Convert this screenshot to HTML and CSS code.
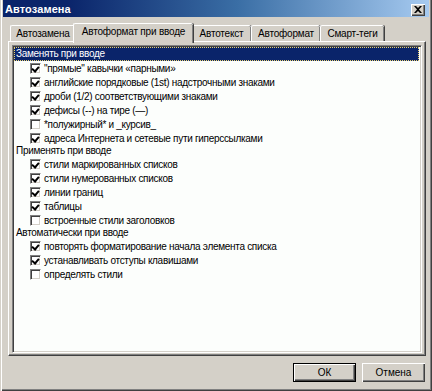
FILE: index.html
```html
<!DOCTYPE html>
<html>
<head>
<meta charset="utf-8">
<link rel="stylesheet" href="styles.css">
</head>
<body>
<div class="window">
  <div class="titlebar">
    <span class="title">Автозамена</span>
    <span class="close"><svg width="8" height="7" viewBox="0 0 8 7"><path d="M0 0h2l2 2 2-2h2l-3 3.5 3 3.5h-2l-2-2-2 2h-2l3-3.5z" fill="#000"/></svg></span>
  </div>
  <div class="content">
    <div class="tabs">
      <div class="tab t1">Автозамена</div>
      <div class="tab t2 active">Автоформат при вводе</div>
      <div class="tab t3">Автотекст</div>
      <div class="tab t4">Автоформат</div>
      <div class="tab t5">Смарт-теги</div>
    </div>
    <div class="panel">
      <div class="list">
        <div class="group sel"><span>Заменять при вводе</span></div>
        <div class="item"><span class="cb on"></span>"прямые" кавычки «парными»</div>
        <div class="item"><span class="cb on"></span>английские порядковые (1st) надстрочными знаками</div>
        <div class="item"><span class="cb on"></span>дроби (1/2) соответствующими знаками</div>
        <div class="item"><span class="cb on"></span>дефисы (--) на тире (—)</div>
        <div class="item"><span class="cb"></span>*полужирный* и _курсив_</div>
        <div class="item"><span class="cb on"></span>адреса Интернета и сетевые пути гиперссылками</div>
        <div class="group">Применять при вводе</div>
        <div class="item"><span class="cb on"></span>стили маркированных списков</div>
        <div class="item"><span class="cb on"></span>стили нумерованных списков</div>
        <div class="item"><span class="cb on"></span>линии границ</div>
        <div class="item"><span class="cb on"></span>таблицы</div>
        <div class="item"><span class="cb"></span>встроенные стили заголовков</div>
        <div class="group">Автоматически при вводе</div>
        <div class="item"><span class="cb on"></span>повторять форматирование начала элемента списка</div>
        <div class="item"><span class="cb on"></span>устанавливать отступы клавишами</div>
        <div class="item"><span class="cb"></span>определять стили</div>
      </div>
    </div>
    <div class="buttons">
      <div class="btn default"><span>ОК</span></div>
      <div class="btn"><span>Отмена</span></div>
    </div>
  </div>
</div>
</body>
</html>
```

FILE: styles.css
```css
html, body {
  margin: 0;
  padding: 0;
  background: #d4d0c8;
}
body {
  font-family: "Liberation Sans", Arial, sans-serif;
  font-size: 10px;
  color: #000;
}
.window {
  width: 432px;
  height: 391px;
  box-sizing: border-box;
  background: #d4d0c8;
  padding: 0 3px 3px 3px;
  box-shadow: inset 1px 0 0 #d4d0c8, inset 2px 0 0 #fff, inset -1px -1px 0 #404040, inset -2px -2px 0 #808080;
  display: flex;
  flex-direction: column;
}
.titlebar {
  height: 17px;
  background: linear-gradient(to right, #0a246a 0%, #0a246a 15%, #3a6ea5 55%, #a6caf0 100%);
  display: flex;
  align-items: center;
  justify-content: space-between;
  padding: 0 4px 0 2px;
}
.title {
  color: #fff;
  font-weight: bold;
  font-size: 11px;
  letter-spacing: 0.1px;
}
.close {
  width: 14px;
  height: 12px;
  background: #d4d0c8;
  box-shadow: inset 1px 1px 0 #fff, inset -1px -1px 0 #404040, inset -2px -2px 0 #808080;
  display: flex;
  align-items: center;
  justify-content: center;
  margin-top: 2px;
}
.content {
  flex: 1;
  display: flex;
  flex-direction: column;
  padding: 6px 3px 0 5px;
}
.tabs {
  display: flex;
  height: 18px;
  padding-left: 2px;
  position: relative;
  z-index: 2;
}
.tab {
  box-sizing: border-box;
  height: 16px;
  margin-top: 2px;
  border-left: 1px solid #fff;
  border-top: 1px solid #fff;
  border-radius: 2px 2px 0 0;
  box-shadow: inset -1px 0 0 #808080, 1px 0 0 #404040;
  display: flex;
  align-items: center;
  justify-content: center;
  white-space: nowrap;
  background: #d4d0c8;
  letter-spacing: -0.2px;
}
.t1 { width: 65px; }
.t2 { width: 120px; }
.t3 { width: 60px; }
.t4 { width: 69px; }
.t5 { width: 64px; }
.tab.active {
  height: 20px;
  margin-top: 0;
  margin-left: -2px;
  margin-right: -2px;
  align-items: flex-start;
  padding-top: 2px;
  position: relative;
  z-index: 3;
}
.panel {
  box-sizing: border-box;
  height: 315px;
  padding: 3px 3px 2px 3px;
  border-left: 1px solid #fff;
  border-top: 1px solid #fff;
  border-right: 1px solid #404040;
  border-bottom: 1px solid #404040;
  box-shadow: inset -1px -1px 0 #808080;
  position: relative;
  z-index: 1;
}
.list {
  box-sizing: border-box;
  height: 100%;
  background: #fcfefc;
  border-left: 1px solid #808080;
  border-top: 1px solid #808080;
  border-right: 1px solid #fff;
  border-bottom: 1px solid #fff;
  box-shadow: inset 1px 1px 0 #404040, inset -1px -1px 0 #d4d0c8;
  padding: 1px 2px 1px 1px;
  letter-spacing: -0.3px;
}
.group {
  height: 12px;
  line-height: 12px;
  padding-left: 2px;
  white-space: nowrap;
}
.group.sel {
  height: 14px;
  line-height: 12px;
  background: #0a246a;
  color: #fff;
  outline: 1px dotted #e8d070;
  outline-offset: -1px;
  padding-top: 1px;
  box-sizing: border-box;
}
.item {
  height: 14px;
  display: flex;
  align-items: center;
  padding-left: 16px;
  white-space: nowrap;
}
.cb {
  width: 11px;
  height: 11px;
  box-sizing: border-box;
  background: #fff;
  border-left: 1px solid #808080;
  border-top: 1px solid #808080;
  border-right: 1px solid #fff;
  border-bottom: 1px solid #fff;
  box-shadow: inset 1px 1px 0 #404040, inset -1px -1px 0 #d4d0c8;
  margin-right: 3px;
  flex: none;
  position: relative;
}
.cb.on::after {
  content: "";
  position: absolute;
  left: 2px;
  top: 1px;
  width: 3px;
  height: 5px;
  border-right: 2px solid #000;
  border-bottom: 2px solid #000;
  transform: rotate(40deg);
}
.buttons {
  display: flex;
  justify-content: flex-end;
  gap: 6px;
  padding-top: 7px;
  padding-right: 1px;
}
.btn {
  box-sizing: border-box;
  width: 63px;
  height: 19px;
  background: #d4d0c8;
  box-shadow: inset 1px 1px 0 #fff, inset -1px -1px 0 #404040, inset -2px -2px 0 #808080;
  display: flex;
  align-items: center;
  justify-content: center;
}
.btn.default {
  border: 1px solid #000;
  box-shadow: inset 1px 1px 0 #fff, inset -1px -1px 0 #404040, inset -2px -2px 0 #808080;
}
```
